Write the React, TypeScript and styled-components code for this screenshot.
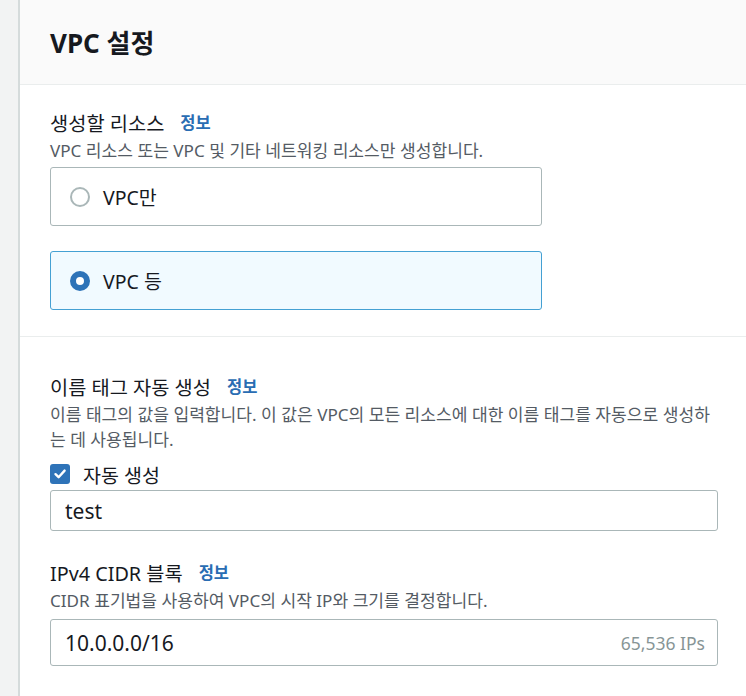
import React, { useState } from "react";
import styled, { createGlobalStyle } from "styled-components";

const GlobalStyle = createGlobalStyle`
    html, body {
        margin: 0;
        padding: 0;
        background: #ffffff;
    }
    body {
        font-family: "Noto Sans", "Noto Sans CJK KR", sans-serif;
        color: #16191f;
    }
`;

const Page = styled.div`
    display: flex;
    min-height: 696px;
`;

const SideStrip = styled.div`
    width: 18px;
    flex-shrink: 0;
    background: #f2f3f3;
    border-right: 2px solid #d5dbdb;
`;

const Panel = styled.div`
    flex: 1;
    display: flex;
    flex-direction: column;
`;

const Header = styled.div`
    height: 84px;
    display: flex;
    align-items: center;
    padding: 0 30px;
    background: #fafafa;
    border-bottom: 1px solid #eaeded;
`;

const Title = styled.h2`
    margin: 0;
    font-size: 26px;
    font-weight: 700;
    color: #16191f;
`;

const Section = styled.div<{ $top: number; $divided?: boolean }>`
    padding: ${(p) => p.$top}px 28px 26px 30px;
    border-top: ${(p) => (p.$divided ? "1px solid #eaeded" : "none")};
    display: flex;
    flex-direction: column;
`;

const Field = styled.div<{ $gap?: number }>`
    display: flex;
    flex-direction: column;
    margin-top: ${(p) => p.$gap ?? 0}px;
`;

const LabelRow = styled.div`
    display: flex;
    align-items: center;
    gap: 16px;
    height: 28px;
    margin-bottom: 2px;
`;

const Label = styled.span`
    font-size: 19.8px;
    color: #16191f;
`;

const InfoLink = styled.a`
    font-size: 16.5px;
    font-weight: 700;
    color: #2a6db3;
    text-decoration: none;
`;

const Description = styled.div`
    font-size: 17.1px;
    line-height: 25px;
    color: #545b64;
    word-break: break-all;
`;

const RadioCard = styled.label<{ $checked: boolean; $gap: number }>`
    box-sizing: border-box;
    width: 492px;
    height: 59px;
    display: flex;
    align-items: center;
    gap: 13px;
    padding: 0 19px;
    margin-top: ${(p) => p.$gap}px;
    border: 1px solid ${(p) => (p.$checked ? "#44a0d3" : "#aab7b8")};
    border-radius: 3px;
    background: ${(p) => (p.$checked ? "#f1faff" : "#ffffff")};
    cursor: pointer;
`;

const RadioDot = styled.span<{ $checked: boolean }>`
    box-sizing: border-box;
    width: 20px;
    height: 20px;
    border-radius: 50%;
    flex-shrink: 0;
    border: ${(p) => (p.$checked ? "6.5px solid #2e73b8" : "2px solid #aab7b8")};
    background: #ffffff;
`;

const OptionText = styled.span`
    font-size: 19.5px;
    color: #16191f;
`;

const CheckRow = styled.label`
    display: flex;
    align-items: center;
    gap: 13px;
    height: 32px;
    margin-top: 6px;
    cursor: pointer;
`;

const CheckBox = styled.span<{ $checked: boolean }>`
    width: 20px;
    height: 20px;
    border-radius: 3px;
    flex-shrink: 0;
    display: flex;
    align-items: center;
    justify-content: center;
    background: ${(p) => (p.$checked ? "#2e73b8" : "#ffffff")};
    border: ${(p) => (p.$checked ? "none" : "2px solid #aab7b8")};
`;

const InputBox = styled.div<{ $height: number; $gap?: number }>`
    box-sizing: border-box;
    width: 668px;
    height: ${(p) => p.$height}px;
    display: flex;
    align-items: center;
    padding: 0 12px 0 14px;
    margin-top: ${(p) => p.$gap ?? 0}px;
    border: 1px solid #aab7b8;
    border-radius: 3px;
    background: #ffffff;
`;

const TextInput = styled.input`
    flex: 1;
    min-width: 0;
    border: none;
    outline: none;
    padding: 0;
    background: transparent;
    font-family: inherit;
    font-size: 21px;
    color: #16191f;
`;

const Suffix = styled.span`
    font-size: 17.5px;
    color: #879596;
`;

export default function App() {
    const [mode, setMode] = useState("more");
    const [autoTag, setAutoTag] = useState(true);
    const [name, setName] = useState("test");
    const [cidr, setCidr] = useState("10.0.0.0/16");

    return (
        <>
            <GlobalStyle />
            <Page>
                <SideStrip />
                <Panel>
                    <Header>
                        <Title>VPC 설정</Title>
                    </Header>

                    <Section $top={23}>
                        <LabelRow>
                            <Label>생성할 리소스</Label>
                            <InfoLink href="#">정보</InfoLink>
                        </LabelRow>
                        <Description>
                            VPC 리소스 또는 VPC 및 기타 네트워킹 리소스만 생성합니다.
                        </Description>
                        <RadioCard
                            $checked={mode === "vpc"}
                            $gap={4}
                            onClick={() => setMode("vpc")}
                        >
                            <RadioDot $checked={mode === "vpc"} />
                            <OptionText>VPC만</OptionText>
                        </RadioCard>
                        <RadioCard
                            $checked={mode === "more"}
                            $gap={25}
                            onClick={() => setMode("more")}
                        >
                            <RadioDot $checked={mode === "more"} />
                            <OptionText>VPC 등</OptionText>
                        </RadioCard>
                    </Section>

                    <Section $top={35} $divided>
                        <Field>
                            <LabelRow>
                                <Label>이름 태그 자동 생성</Label>
                                <InfoLink href="#">정보</InfoLink>
                            </LabelRow>
                            <Description>
                                이름 태그의 값을 입력합니다. 이 값은 VPC의 모든 리소스에 대한 이름 태그를 자동으로 생성하는 데 사용됩니다.
                            </Description>
                            <CheckRow onClick={() => setAutoTag(!autoTag)}>
                                <CheckBox $checked={autoTag}>
                                    {autoTag && (
                                        <svg width="14" height="14" viewBox="0 0 14 14">
                                            <path
                                                d="M2.5 7.2 L5.6 10.2 L11.6 3.6"
                                                fill="none"
                                                stroke="#ffffff"
                                                strokeWidth="2.4"
                                                strokeLinecap="round"
                                                strokeLinejoin="round"
                                            />
                                        </svg>
                                    )}
                                </CheckBox>
                                <OptionText>자동 생성</OptionText>
                            </CheckRow>
                            <InputBox $height={41}>
                                <TextInput value={name} onChange={(e) => setName(e.target.value)} />
                            </InputBox>
                        </Field>

                        <Field $gap={27}>
                            <LabelRow>
                                <Label>IPv4 CIDR 블록</Label>
                                <InfoLink href="#">정보</InfoLink>
                            </LabelRow>
                            <Description>
                                CIDR 표기법을 사용하여 VPC의 시작 IP와 크기를 결정합니다.
                            </Description>
                            <InputBox $height={47} $gap={6}>
                                <TextInput value={cidr} onChange={(e) => setCidr(e.target.value)} />
                                <Suffix>65,536 IPs</Suffix>
                            </InputBox>
                        </Field>
                    </Section>
                </Panel>
            </Page>
        </>
    );
}
